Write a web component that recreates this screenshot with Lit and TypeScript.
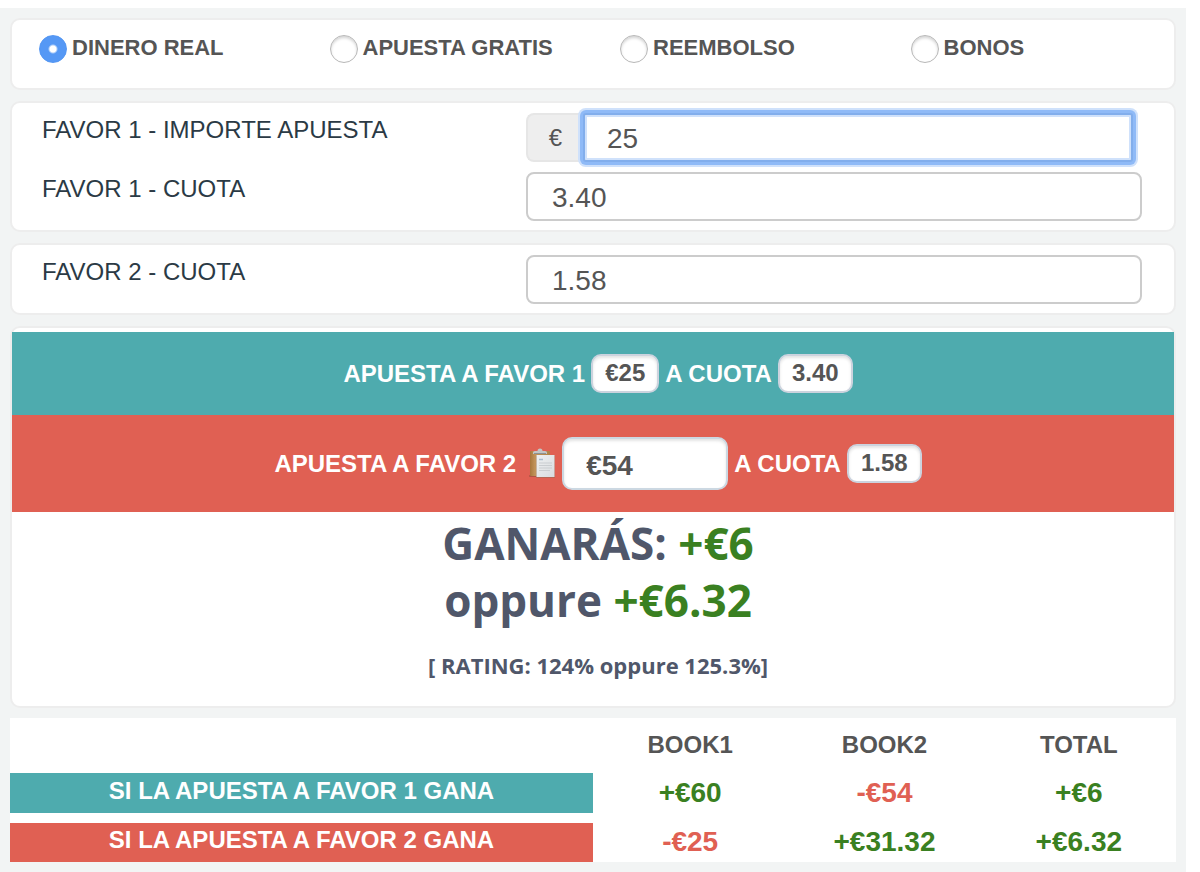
import { LitElement, html, css, svg } from "lit";
import { customElement, state } from "lit/decorators.js";
import { classMap } from "lit/directives/class-map.js";

const MODES = ["DINERO REAL", "APUESTA GRATIS", "REEMBOLSO", "BONOS"];

const RESULTS = [
  { label: "SI LA APUESTA A FAVOR 1 GANA", tone: "teal", values: ["+€60", "-€54", "+€6"] },
  { label: "SI LA APUESTA A FAVOR 2 GANA", tone: "red", values: ["-€25", "+€31.32", "+€6.32"] },
];

const clipboard = svg`
  <defs>
    <linearGradient id="board" x1="0" x2="1" y1="0" y2="0">
      <stop offset="0" stop-color="#a8763c" />
      <stop offset="0.25" stop-color="#c1935a" />
      <stop offset="1" stop-color="#b08247" />
    </linearGradient>
    <linearGradient id="sheet" x1="0" x2="1" y1="0" y2="1">
      <stop offset="0" stop-color="#eef0f1" />
      <stop offset="1" stop-color="#d9dcdf" />
    </linearGradient>
  </defs>
  <rect x="1" y="27" width="9" height="2" rx="1" fill="#8f4a38" opacity="0.6" />
  <rect x="2" y="3" width="20" height="25" rx="1" fill="url(#board)" />
  <path d="M5 6V4.500Q5 3 7 3H9.500Q9.500 0.500 12 0.500T14.500 3H17Q19 3 19 4.500V6Z" fill="#c3c5c4" />
  <path d="M6 5.500H18" stroke="#8e9290" stroke-width="1" />
  <rect x="8" y="7.500" width="19" height="22.500" fill="#8b6b55" opacity="0.5" />
  <rect x="8.500" y="7" width="18" height="22" fill="url(#sheet)" />
  <path d="M11 11.500H15" stroke="#a9bccd" stroke-width="1.500" />
  <path d="M11 15H24M11 17.500H24M11 20H24M11 22.500H22" stroke="#c9cdd0" stroke-width="1" />
`;

@customElement("app-root")
export class AppRoot extends LitElement {
  @state() private mode = 0;

  static styles = css`
    :host {
      display: block;
      padding: 8px 14px 0 0;
      background: #fff;
      font-family: "Liberation Sans", Arial, sans-serif;
      font-size: 24px;
      line-height: 28px;
      color: #555;
    }
    * {
      box-sizing: border-box;
    }
    .calculator {
      display: flex;
      flex-direction: column;
      gap: 11px;
      min-height: calc(100vh - 8px);
      padding: 10px;
      background: #f2f4f4;
    }
    .card {
      margin: 0;
      padding: 0;
      background: #fff;
      border: 2px solid #ededed;
      border-radius: 10px;
    }
    .modes {
      display: grid;
      grid-template-columns: repeat(4, 1fr);
      min-height: 72px;
      align-items: start;
    }
    .mode {
      display: flex;
      align-items: center;
      gap: 5px;
      padding: 13px 0 0 27px;
      font-size: 22px;
      font-weight: bold;
      white-space: nowrap;
    }
    .radio {
      appearance: none;
      flex: none;
      width: 28px;
      height: 28px;
      margin: 2px 0 0;
      border: 1px solid #b8b8b8;
      border-radius: 50%;
      background: #fff;
      box-shadow: inset 0 2px 3px #d4d4d4;
    }
    .radio:checked {
      border-color: #5396f3;
      background: radial-gradient(circle, #fff 0 3px, #5598f5 5px);
      box-shadow: none;
    }
    .fields {
      display: grid;
      gap: 10px;
      padding: 10px 32px 9px 30px;
    }
    .field {
      display: grid;
      grid-template-columns: 484fr 616fr;
      align-items: start;
      color: #2b3a45;
    }
    .label {
      padding-top: 3px;
    }
    .input {
      width: 100%;
      min-width: 0;
      height: 49px;
      margin: 0;
      padding: 2px 24px 0;
      border: 2px solid #ccc;
      border-radius: 8px;
      background: #fff;
      font: inherit;
      font-size: 28px;
      color: #555;
      outline: none;
    }
    .group {
      display: flex;
      padding-right: 9px;
    }
    .addon {
      flex: none;
      width: 57px;
      padding: 9px 0 8px;
      border: 2px solid #e6e6e6;
      border-right: 0;
      border-radius: 8px 0 0 8px;
      background: #eee;
      color: #555;
      text-align: center;
    }
    .active {
      padding-left: 22px;
      border-color: #82aeec;
      border-radius: 3px;
      box-shadow: 0 0 0 3px #8fbaf7, 0 0 0 5px #cfe1fb, inset 0 0 0 2px #cfe1fb;
    }
    .summary {
      padding: 4px 0 26px;
      text-align: center;
    }
    .band {
      display: flex;
      flex-wrap: wrap;
      justify-content: center;
      align-items: center;
      gap: 6px;
      padding-left: 10px;
      color: #fff;
      font-weight: bold;
    }
    .teal {
      background: #4eabae;
      color: #fff;
    }
    .red {
      background: #e06053;
      color: #fff;
    }
    .first {
      min-height: 83px;
    }
    .second {
      min-height: 97px;
    }
    .pill {
      padding: 3px 12px 4px;
      border: 2px solid #ccd3de;
      border-radius: 10px;
      background: #fff;
      box-shadow: inset 0 2px 3px #e4e4e4;
      color: #555;
    }
    .copy {
      display: flex;
      margin-left: 6px;
      padding: 0;
      border: 0;
      background: none;
    }
    .clip {
      width: 28px;
      height: 31px;
    }
    .stake {
      width: 166px;
      height: 53px;
      padding: 4px 22px 0;
      border: 2px solid #ccd8e2;
      border-radius: 10px;
      box-shadow: inset 0 2px 3px #e4e4e4;
      font-weight: bold;
    }
    .headline,
    .rating {
      margin: 0;
      padding-left: 10px;
      font-family: "Open Sans", sans-serif;
      font-weight: bold;
      color: #50576a;
    }
    .headline {
      padding-top: 3px;
      font-size: 44px;
      line-height: 57px;
    }
    .rating {
      padding-top: 21px;
      font-size: 22px;
      line-height: 30px;
    }
    .gain {
      color: #3a8021;
    }
    .loss {
      color: #e06053;
    }
    .results {
      width: 100%;
      margin-top: -1px;
      border-spacing: 0;
      table-layout: fixed;
      background: #fff;
      text-align: center;
    }
    .results th,
    .results td {
      padding: 0;
      font-weight: bold;
      vertical-align: top;
    }
    .results .wide {
      width: 50%;
    }
    .results .book {
      height: 55px;
      padding-top: 13px;
    }
    .results .outcome {
      height: 40px;
      padding: 4px 0 8px;
    }
    .results .value {
      padding-top: 6px;
      font-size: 28px;
    }
    .results .outcome.spaced {
      height: 49px;
      padding: 3px 0 8px;
      border-top: 10px solid #fff;
    }
    .results .value.spaced {
      padding-top: 15px;
    }
  `;

  render() {
    return html`
      <main class="calculator">
        <div class="card modes" role="radiogroup" aria-label="Tipo de apuesta">
          ${MODES.map(
            (name, i) => html`<label class="mode">
              <input
                class="radio"
                type="radio"
                name="mode"
                .checked=${this.mode === i}
                @change=${() => (this.mode = i)}
              />${name}</label>`
          )}
        </div>

        <section class="card fields">
          <div class="field">
            <label class="label" for="stake1">FAVOR 1 - IMPORTE APUESTA</label>
            <div class="group">
              <span class="addon">€</span>
              <input class="input active" id="stake1" type="text" inputmode="decimal" value="25" />
            </div>
          </div>
          <div class="field">
            <label class="label" for="odds1">FAVOR 1 - CUOTA</label>
            <input class="input" id="odds1" type="text" inputmode="decimal" value="3.40" />
          </div>
        </section>

        <section class="card fields">
          <div class="field">
            <label class="label" for="odds2">FAVOR 2 - CUOTA</label>
            <input class="input" id="odds2" type="text" inputmode="decimal" value="1.58" />
          </div>
        </section>

        <section class="card summary">
          <div class="band teal first">
            <span>APUESTA A FAVOR 1</span>
            <span class="pill">€25</span>
            <span>A CUOTA</span>
            <span class="pill">3.40</span>
          </div>
          <div class="band red second">
            <label for="stake2">APUESTA A FAVOR 2</label>
            <button class="copy" type="button" aria-label="Copiar">
              <svg class="clip" viewBox="0 0 28 31" aria-hidden="true">${clipboard}</svg>
            </button>
            <input class="input stake" id="stake2" type="text" value="€54" />
            <span>A CUOTA</span>
            <span class="pill">1.58</span>
          </div>
          <h2 class="headline">
            GANARÁS: <span class="gain">+€6</span><br />oppure <span class="gain">+€6.32</span>
          </h2>
          <p class="rating">[ RATING: 124% oppure 125.3%]</p>
        </section>

        <table class="results">
          <thead>
            <tr>
              <td class="wide"></td>
              <th class="book" scope="col">BOOK1</th>
              <th class="book" scope="col">BOOK2</th>
              <th class="book" scope="col">TOTAL</th>
            </tr>
          </thead>
          <tbody>
            ${RESULTS.map(
              (row, i) => html`<tr>
                <th class="outcome ${classMap({ [row.tone]: true, spaced: i > 0 })}" scope="row">
                  ${row.label}
                </th>
                ${row.values.map(
                  (v) => html`<td
                    class="value ${classMap({
                      gain: v.startsWith("+"),
                      loss: v.startsWith("-"),
                      spaced: i > 0,
                    })}"
                  >
                    ${v}
                  </td>`
                )}
              </tr>`
            )}
          </tbody>
        </table>
      </main>
    `;
  }
}
